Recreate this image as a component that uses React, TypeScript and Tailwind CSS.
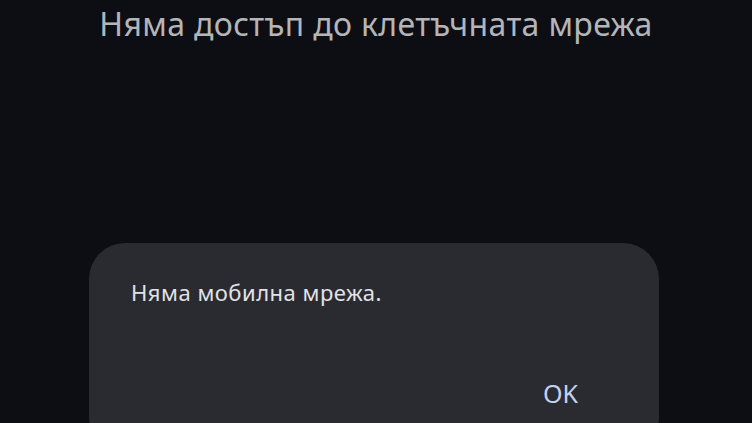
export default function App() {
  return (
    <div
      lang="bg"
      className="h-[423px] w-[752px] overflow-hidden bg-[#0d0e13] flex flex-col"
      style={{ fontFamily: '"Noto Sans", Roboto, sans-serif' }}
    >
      {/* Заглавие */}
      <h1 className="pt-[2px] text-center text-[32px] leading-[44px] tracking-[0.35px] text-[#b4b5b9]">
        Няма достъп до клетъчната мрежа
      </h1>

      {/* Диалог */}
      <div className="mt-auto ml-[89px] w-[570px] h-[210px] -mb-[30px] rounded-[36px] bg-[#2a2b31] pl-[42px] pr-[81px] pt-[34px] flex flex-col">
        <p className="text-[22px] leading-[30px] tracking-[0.5px] text-[#e2e2e6]">Няма мобилна мрежа.</p>
        <div className="mt-auto mb-[45px] flex justify-end">
          <span className="text-[25px] leading-[30px] text-[#c3d1ee]">OK</span>
        </div>
      </div>
    </div>
  )
}
